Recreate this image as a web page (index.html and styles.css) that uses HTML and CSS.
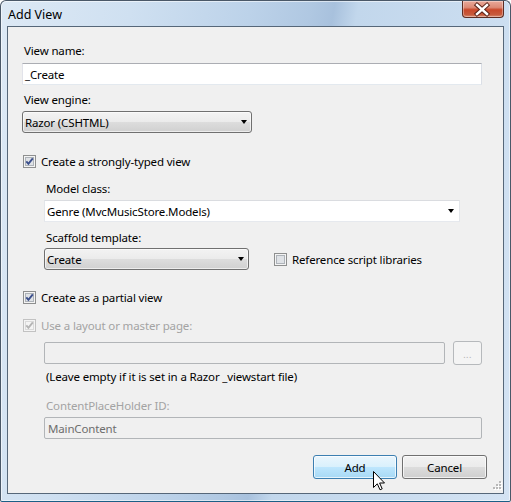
FILE: index.html
```html
<!DOCTYPE html>
<html>
<head>
<meta charset="utf-8">
<link rel="stylesheet" href="styles.css">
</head>
<body>
<div class="window">
  <div class="titlebar">
    <span class="title">Add View</span>
    <div class="close">
      <svg width="42" height="17" viewBox="0 0 42 17">
        <path d="M16 4 L26 13 M26 4 L16 13" stroke="#5a2218" stroke-width="4.4" stroke-linecap="square"/>
        <path d="M16 4 L26 13 M26 4 L16 13" stroke="#ffffff" stroke-width="2.4" stroke-linecap="square"/>
      </svg>
    </div>
  </div>
  <div class="client">
    <div class="label first">View name:</div>
    <div class="textbox name">_Create</div>
    <div class="label gap7">View engine:</div>
    <div class="combo engine"><span>Razor (CSHTML)</span><span class="arrow"></span></div>

    <div class="check strong">
      <svg class="cb" width="13" height="13" viewBox="0 0 13 13"><rect x="0.5" y="0.5" width="12" height="12" fill="#f4f4f4" stroke="#8e8f8f"/><rect x="2.5" y="2.5" width="8" height="8" fill="#dfe2e6" stroke="#aeb3b9"/><path d="M3.3 6.4 L5.4 8.8 L9.8 3.4" fill="none" stroke="#3b4f8c" stroke-width="1.9"/></svg>
      <span>Create a strongly-typed view</span>
    </div>

    <div class="indent">
      <div class="label gap12">Model class:</div>
      <div class="editcombo"><span>Genre (MvcMusicStore.Models)</span><span class="arrow"></span></div>
      <div class="label gap8">Scaffold template:</div>
      <div class="scaffold-row">
        <div class="combo scaffold"><span>Create</span><span class="arrow"></span></div>
        <div class="check ref">
          <svg class="cb" width="13" height="13" viewBox="0 0 13 13"><rect x="0.5" y="0.5" width="12" height="12" fill="#f4f4f4" stroke="#8e8f8f"/><rect x="2.5" y="2.5" width="8" height="8" fill="#dfe2e6" stroke="#aeb3b9"/></svg>
          <span>Reference script libraries</span>
        </div>
      </div>
    </div>

    <div class="check partial">
      <svg class="cb" width="13" height="13" viewBox="0 0 13 13"><rect x="0.5" y="0.5" width="12" height="12" fill="#f4f4f4" stroke="#8e8f8f"/><rect x="2.5" y="2.5" width="8" height="8" fill="#dfe2e6" stroke="#aeb3b9"/><path d="M3.3 6.4 L5.4 8.8 L9.8 3.4" fill="none" stroke="#3b4f8c" stroke-width="1.9"/></svg>
      <span>Create as a partial view</span>
    </div>
    <div class="check layout disabled">
      <svg class="cb" width="13" height="13" viewBox="0 0 13 13"><rect x="0.5" y="0.5" width="12" height="12" fill="#f4f4f4" stroke="#c2c2c2"/><rect x="2.5" y="2.5" width="8" height="8" fill="#f4f4f4" stroke="#dadada"/><path d="M3.3 6.4 L5.4 8.8 L9.8 3.4" fill="none" stroke="#b4b4b4" stroke-width="1.9"/></svg>
      <span>Use a layout or master page:</span>
    </div>

    <div class="indent">
      <div class="layout-row">
        <div class="textbox off layoutbox"></div>
        <div class="browse">...</div>
      </div>
      <div class="label gap4">(Leave empty if it is set in a Razor _viewstart file)</div>
      <div class="label gap14 dim">ContentPlaceHolder ID:</div>
      <div class="textbox off cph">MainContent</div>
    </div>

    <div class="buttons">
      <div class="btn hover">Add</div>
      <div class="btn">Cancel</div>
    </div>

    <svg class="grip" width="11" height="11" viewBox="0 0 11 11">
      <g fill="#ffffff"><rect x="9" y="1" width="2" height="2"/><rect x="6" y="4" width="2" height="2"/><rect x="9" y="4" width="2" height="2"/><rect x="3" y="7" width="2" height="2"/><rect x="6" y="7" width="2" height="2"/><rect x="9" y="7" width="2" height="2"/></g>
      <g fill="#b8b8b8"><rect x="8" y="0" width="2" height="2"/><rect x="5" y="3" width="2" height="2"/><rect x="8" y="3" width="2" height="2"/><rect x="2" y="6" width="2" height="2"/><rect x="5" y="6" width="2" height="2"/><rect x="8" y="6" width="2" height="2"/></g>
    </svg>
  </div>
  <svg class="cursor" width="13" height="20" viewBox="0 0 13 20">
    <path d="M0.5 0.5 L0.5 16.5 L4.3 12.8 L7 18.8 L9.2 17.8 L6.6 12 L11.5 12 Z" fill="#ffffff" stroke="#000000" stroke-width="1" stroke-linejoin="miter"/>
  </svg>
</div>
</body>
</html>
```

FILE: styles.css
```css
html, body {
  margin: 0;
  padding: 0;
  background: #ffffff;
}

body {
  font-family: "Noto Sans", "Open Sans", sans-serif;
  font-size: 11.5px;
  letter-spacing: -0.15px;
  line-height: 15px;
  color: #000000;
}

.window {
  position: relative;
  box-sizing: border-box;
  width: 511px;
  height: 502px;
  display: flex;
  flex-direction: column;
  padding: 0 6px 7px 6px;
  border: 1px solid #4a5868;
  border-bottom-color: #1c5f86;
  border-radius: 6px 6px 2px 2px;
  background: linear-gradient(100deg, #dde9f5 0%, #cfe0f1 22%, #bcd2e9 42%, #b0c8e2 52%, #a8c1dd 56%, #c2d7ec 60%, #c9dcef 78%, #d4e3f3 100%);
  box-shadow: inset 0 0 0 1px rgba(255, 255, 255, 0.55);
}

.titlebar {
  height: 25px;
  display: flex;
  align-items: flex-start;
}

.title {
  margin-left: 1px;
  margin-top: 6px;
  font-size: 12.5px;
  letter-spacing: 0;
  color: #000000;
}

.close {
  margin-left: auto;
  width: 42px;
  height: 17px;
  box-sizing: border-box;
  border: 1px solid #5d2c22;
  border-top: none;
  border-radius: 0 0 4px 4px;
  background: linear-gradient(#e9a99a 0%, #dc8a76 40%, #c9482a 55%, #c75a3c 85%, #d98c72 100%);
  box-shadow: inset 0 0 0 1px rgba(255, 255, 255, 0.35);
  display: flex;
  justify-content: center;
  align-items: center;
}

.close svg {
  display: block;
  margin-left: -2px;
}

.client {
  position: relative;
  flex: 1;
  border: 1px solid #566779;
  background: #f0f0f0;
  padding: 16px 0 0 14px;
  display: flex;
  flex-direction: column;
  align-items: flex-start;
}

.label {
  margin-left: 2px;
  height: 15px;
  white-space: nowrap;
}

.label.dim,
.check.disabled {
  color: #a3a3a3;
}

.gap4 { margin-top: 4px; }
.gap7 { margin-top: 7px; }
.gap8 { margin-top: 8px; }
.gap12 { margin-top: 12px; }
.gap14 { margin-top: 14px; }

.textbox {
  box-sizing: border-box;
  height: 22px;
  background: #ffffff;
  border: 1px solid;
  border-color: #abadb3 #dbdfe6 #e3e9ef #e2e3ea;
  padding: 0 3px;
  display: flex;
  align-items: center;
  white-space: nowrap;
}

.textbox.name {
  margin-top: 5px;
  width: 460px;
  padding-left: 2px;
}

.textbox.off {
  background: #f0f0f0;
  border-color: #b2b5b8;
  border-radius: 2px;
  color: #6d6d6d;
}

.combo {
  position: relative;
  box-sizing: border-box;
  height: 22px;
  border: 1px solid #707070;
  border-radius: 3px;
  background: linear-gradient(#f3f3f3 0%, #ebebeb 50%, #dddddd 50%, #d0d0d0 100%);
  box-shadow: inset 0 0 0 1px rgba(255, 255, 255, 0.6);
  display: flex;
  align-items: center;
  padding-left: 2px;
  white-space: nowrap;
}

.combo.engine {
  margin-top: 4px;
  width: 230px;
}

.combo.scaffold {
  width: 205px;
}

.arrow {
  margin-left: auto;
  margin-right: 4px;
  width: 0;
  height: 0;
  border-left: 3.5px solid transparent;
  border-right: 3.5px solid transparent;
  border-top: 4px solid #000000;
}

.editcombo {
  box-sizing: border-box;
  margin-top: 4px;
  width: 416px;
  height: 22px;
  background: #ffffff;
  border: 1px solid;
  border-color: #dadce0 #e3e6ea #e6e9ee #e3e6ea;
  display: flex;
  align-items: center;
  padding-left: 2px;
  white-space: nowrap;
}

.editcombo .arrow {
  margin-right: 5px;
}

.check {
  display: flex;
  align-items: center;
  height: 15px;
  margin-left: 1px;
  white-space: nowrap;
}

.check .cb {
  display: block;
  flex: none;
  margin-right: 5px;
}

.check.strong { margin-top: 21px; }
.check.partial { margin-top: 20px; }
.check.layout { margin-top: 13px; }

.indent {
  margin-left: 22px;
  display: flex;
  flex-direction: column;
  align-items: flex-start;
}

.scaffold-row {
  margin-top: 3px;
  display: flex;
  align-items: center;
  height: 22px;
}

.check.ref {
  margin-left: 25px;
}

.layout-row {
  margin-top: 8px;
  display: flex;
  align-items: center;
  height: 24px;
}

.layoutbox {
  width: 401px;
}

.browse {
  box-sizing: border-box;
  margin-left: 8px;
  width: 29px;
  height: 24px;
  border: 1px solid #b6b9bc;
  border-radius: 3px;
  background: #f4f4f4;
  color: #b0b0b0;
  font-size: 9px;
  line-height: 9px;
  display: flex;
  justify-content: center;
  align-items: center;
  padding-top: 2px;
  letter-spacing: 0.5px;
}

.cph {
  margin-top: 4px;
  width: 438px;
}

.buttons {
  align-self: stretch;
  margin-top: 16px;
  display: flex;
  justify-content: flex-end;
  gap: 5px;
  padding-right: 16px;
}

.btn {
  box-sizing: border-box;
  width: 85px;
  height: 24px;
  border: 1px solid #707070;
  border-radius: 3px;
  background: linear-gradient(#f2f2f2 0%, #ebebeb 50%, #dddddd 50%, #cfcfcf 100%);
  box-shadow: inset 0 0 0 1px rgba(255, 255, 255, 0.7);
  display: flex;
  justify-content: center;
  align-items: center;
}

.btn.hover {
  width: 84px;
  border-color: #3c7fb1;
  background: linear-gradient(#eaf6fd 0%, #d9f0fc 50%, #bee6fd 50%, #a7d9f5 100%);
}

.grip {
  position: absolute;
  right: 1px;
  bottom: 1px;
}

.cursor {
  position: absolute;
  left: 372px;
  top: 470px;
}
```
